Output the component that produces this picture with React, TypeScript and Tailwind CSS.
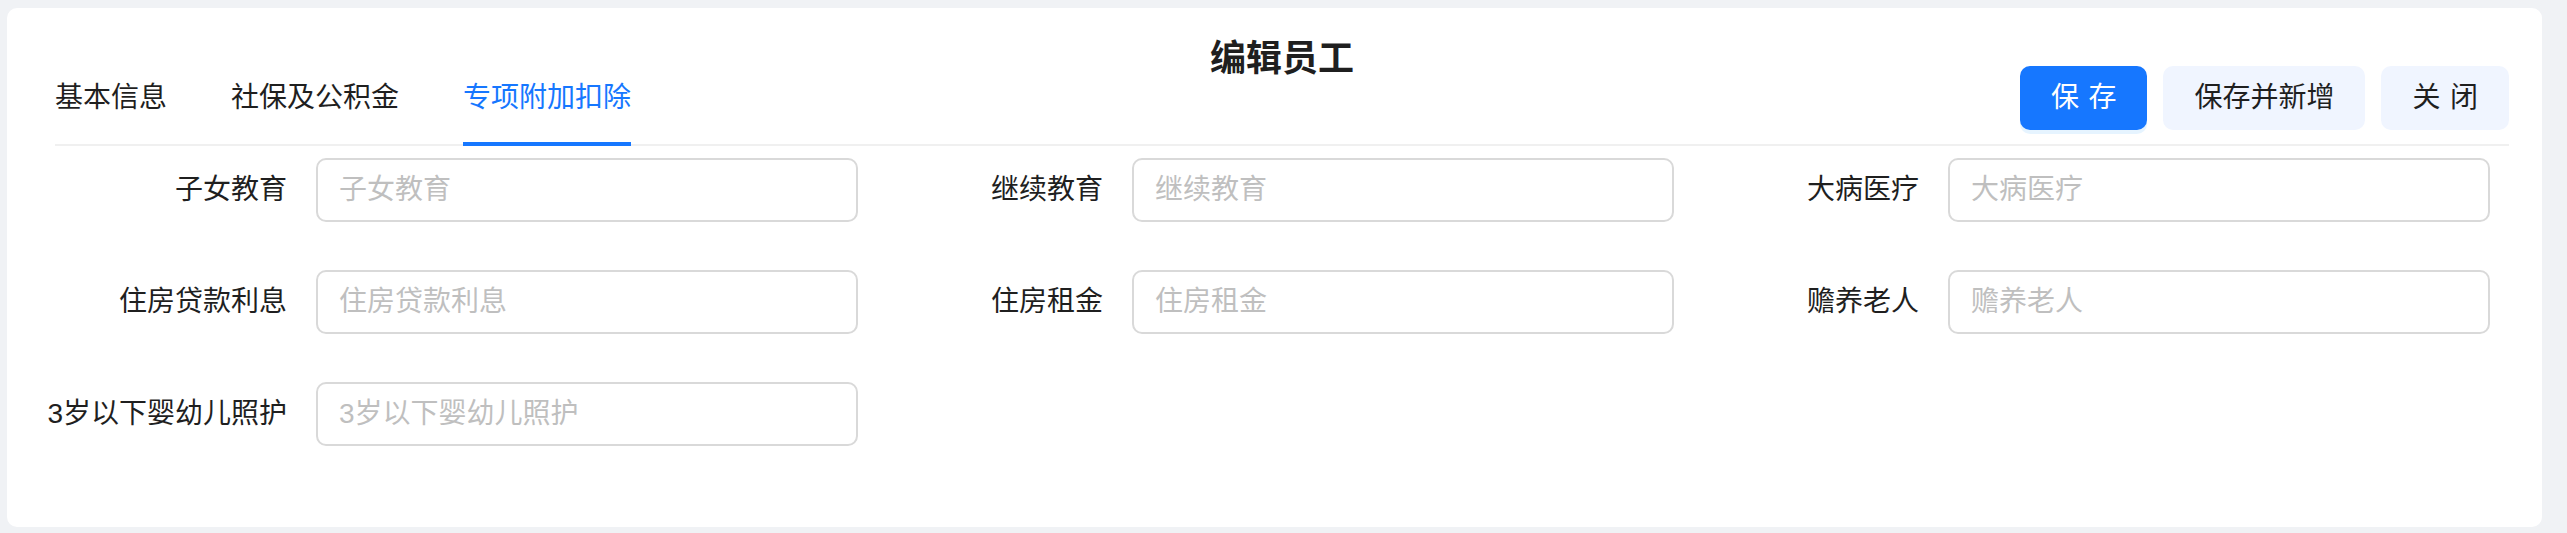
import React from 'react';

export default function App() {
  const tabs = [
    { label: "基本信息", active: false },
    { label: "社保及公积金", active: false },
    { label: "专项附加扣除", active: true },
  ];

  const fields = [
    "子女教育",
    "继续教育",
    "大病医疗",
    "住房贷款利息",
    "住房租金",
    "赡养老人",
    "3岁以下婴幼儿照护",
  ];

  return (
    <div className="w-full h-[533px] bg-[#f0f2f5] pt-[8px] pl-[7px] pr-[25px] pb-[8px] font-['Liberation_Sans','Noto_Sans_CJK_SC',sans-serif] text-[#1f1f1f]">
      <div className="relative bg-white rounded-[10px] pl-[48px] pr-[33px] pt-[44px] pb-[81px]">
        {/* TITLE */}
        <h1 className="absolute top-[26px] left-[48px] right-[33px] text-center text-[36px] leading-[50px] font-bold text-[#1f1f1f]">
          编辑员工
        </h1>

        {/* TABS + ACTIONS */}
        <div className="flex items-center justify-between border-b-2 border-[#f0f0f0]">
          <div className="flex items-center gap-[64px]">
            {tabs.map((tab, idx) => (
              <div key={idx} className="relative py-[24px]">
                <span className={`text-[28px] leading-[44px] whitespace-nowrap ${tab.active ? 'text-[#1677ff]' : 'text-[#1f1f1f]'}`}>
                  {tab.label}
                </span>
                {tab.active && (
                  <span className="absolute left-0 right-0 bottom-[-2px] h-[4px] bg-[#1677ff]"></span>
                )}
              </div>
            ))}
          </div>
          <div className="flex items-center gap-[16px]">
            <button className="h-[64px] px-[31px] rounded-[10px] bg-[#1677ff] text-white text-[28px] leading-[44px] whitespace-nowrap shadow-[0_4px_0_rgba(5,145,255,0.1)]">
              <span className="inline-block tracking-[0.34em] mr-[-0.34em]">保存</span>
            </button>
            <button className="h-[64px] px-[31px] rounded-[10px] bg-[#f0f5ff] text-[#1f1f1f] text-[28px] leading-[44px] whitespace-nowrap">
              保存并新增
            </button>
            <button className="h-[64px] px-[31px] rounded-[10px] bg-[#f0f5ff] text-[#1f1f1f] text-[28px] leading-[44px] whitespace-nowrap">
              <span className="inline-block tracking-[0.34em] mr-[-0.34em]">关闭</span>
            </button>
          </div>
        </div>

        {/* FORM */}
        <div className="grid grid-cols-3 gap-y-[48px] mt-[12px] ml-[-13px] mr-[19px]">
          {fields.map((name, idx) => (
            <div key={idx} className="flex items-center">
              <label className="w-[274px] shrink-0 pr-[29px] text-right text-[28px] leading-[44px] whitespace-nowrap text-[#1f1f1f]">
                {name}
              </label>
              <input
                placeholder={name}
                className="flex-1 min-w-0 h-[64px] border-2 border-[#d9d9d9] rounded-[10px] px-[21px] text-[28px] text-[#1f1f1f] placeholder:text-[#bfbfbf] outline-none bg-white"
              />
            </div>
          ))}
        </div>
      </div>
    </div>
  );
}
